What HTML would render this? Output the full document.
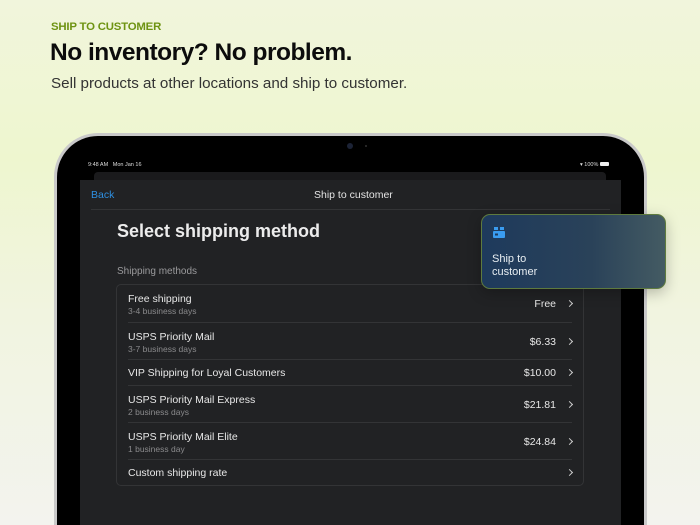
<!DOCTYPE html>
<html><head><meta charset="utf-8"><style>
*{margin:0;padding:0;box-sizing:border-box}
html,body{width:700px;height:525px;overflow:hidden}
body{position:relative;font-family:"Liberation Sans",sans-serif;background:linear-gradient(180deg,#f1f5dc 0%,#eef6cf 30%,#f1f4e0 60%,#f3f3ee 100%)}
.a{position:absolute}
.tag{left:51px;top:21px;font-size:11.4px;font-weight:bold;color:#6e9312;letter-spacing:-.2px}
.h1{left:50px;top:39px;font-size:24.5px;font-weight:bold;color:#0c0c0c;letter-spacing:-.5px}
.sub{left:51px;top:75px;font-size:15.2px;color:#333}
.frame{left:54px;top:133px;width:593px;height:392px;border-radius:44px 44px 0 0;background:#000;border:3px solid #c9c9c9;border-bottom:none}
.screen{left:80px;top:158px;width:541px;height:367px;border-radius:14px 14px 0 0;background:#000}
.strip{left:94px;top:172px;width:512px;height:10px;background:#1a1a1c;border-radius:4px 4px 0 0}
.sheet{left:80px;top:180px;width:541px;height:345px;background:#212224}
.st{font-size:5.5px;color:#ddd;top:162px}
.card{left:116px;top:284px;width:468px;height:202px;border:1px solid #333436;border-radius:5px}
.row{position:absolute;left:11px;right:11px;border-bottom:1px solid #333436;color:#e8e8e8}
.row:last-child{border-bottom:none}
.t{position:absolute;left:0;font-size:10.5px}
.s{position:absolute;left:0;font-size:8.5px;color:#8a8a8c}
.p{position:absolute;right:16px;font-size:10.5px}
.c{position:absolute;right:0;width:5px;height:5px;border-right:1.3px solid #ccc;border-top:1.3px solid #ccc;transform:rotate(45deg)}
.pop{left:481px;top:214px;width:185px;height:75px;border-radius:9px;background:linear-gradient(90deg,#1e3a5c 0%,#2a4259 60%,#445b63 100%);border:1px solid #5e7a3e;box-shadow:0 4px 14px rgba(0,0,0,.25)}
</style></head><body>
<div class="a tag">SHIP TO CUSTOMER</div>
<div class="a h1">No inventory? No problem.</div>
<div class="a sub">Sell products at other locations and ship to customer.</div>
<div class="a frame"></div>
<div class="a" style="left:347px;top:143px;width:6px;height:6px;border-radius:50%;background:#1c2336"></div>
<div class="a" style="left:365px;top:145px;width:2px;height:2px;border-radius:50%;background:#333"></div>
<div class="a screen"></div>
<div class="a st" style="left:88px">9:48 AM&nbsp;&nbsp; Mon Jan 16</div>
<div class="a st" style="left:580px">▾ 100% <span style="display:inline-block;width:9px;height:4px;background:#eee;border-radius:1px"></span></div>
<div class="a strip"></div>
<div class="a sheet"></div>
<div class="a" style="left:91px;top:189px;font-size:10.5px;color:#2e8fe0">Back</div>
<div class="a" style="left:314px;top:189px;font-size:10.5px;color:#e4e4e4">Ship to customer</div>
<div class="a" style="left:91px;top:209px;width:519px;height:1px;background:#333436"></div>
<div class="a" style="left:117px;top:221px;font-size:18px;font-weight:bold;color:#ececec">Select shipping method</div>
<div class="a" style="left:117px;top:266px;font-size:10px;color:#9a9a9c">Shipping methods</div>
<div class="a card">
<div class="row" style="top:0;height:38px"><div class="t" style="top:8px">Free shipping</div><div class="s" style="top:21px">3-4 business days</div><div class="p" style="top:13px">Free</div><div class="c" style="top:16px"></div></div>
<div class="row" style="top:38px;height:37px"><div class="t" style="top:8px">USPS Priority Mail</div><div class="s" style="top:21px">3-7 business days</div><div class="p" style="top:13px">$6.33</div><div class="c" style="top:16px"></div></div>
<div class="row" style="top:75px;height:26px"><div class="t" style="top:7px">VIP Shipping for Loyal Customers</div><div class="p" style="top:7px">$10.00</div><div class="c" style="top:10px"></div></div>
<div class="row" style="top:101px;height:37px"><div class="t" style="top:8px">USPS Priority Mail Express</div><div class="s" style="top:21px">2 business days</div><div class="p" style="top:13px">$21.81</div><div class="c" style="top:16px"></div></div>
<div class="row" style="top:138px;height:37px"><div class="t" style="top:8px">USPS Priority Mail Elite</div><div class="s" style="top:21px">1 business day</div><div class="p" style="top:13px">$24.84</div><div class="c" style="top:16px"></div></div>
<div class="row" style="top:175px;height:26px"><div class="t" style="top:7px">Custom shipping rate</div><div class="c" style="top:10px"></div></div>
</div>
<div class="a pop">
<svg class="a" style="left:11px;top:11px" width="13" height="13" viewBox="0 0 13 13"><rect x="1" y="1" width="4" height="3" fill="#3a9cf0"/><rect x="7" y="1" width="4" height="3" fill="#3a9cf0"/><rect x="0" y="5" width="12" height="7" rx="1" fill="#3a9cf0"/><rect x="2" y="7.5" width="3" height="2" fill="#1e3a5c"/></svg>
<div class="a" style="left:10px;top:38px;font-size:11px;color:#e8eef2;line-height:13px">Ship to<br>customer</div>
</div>
</body></html>
